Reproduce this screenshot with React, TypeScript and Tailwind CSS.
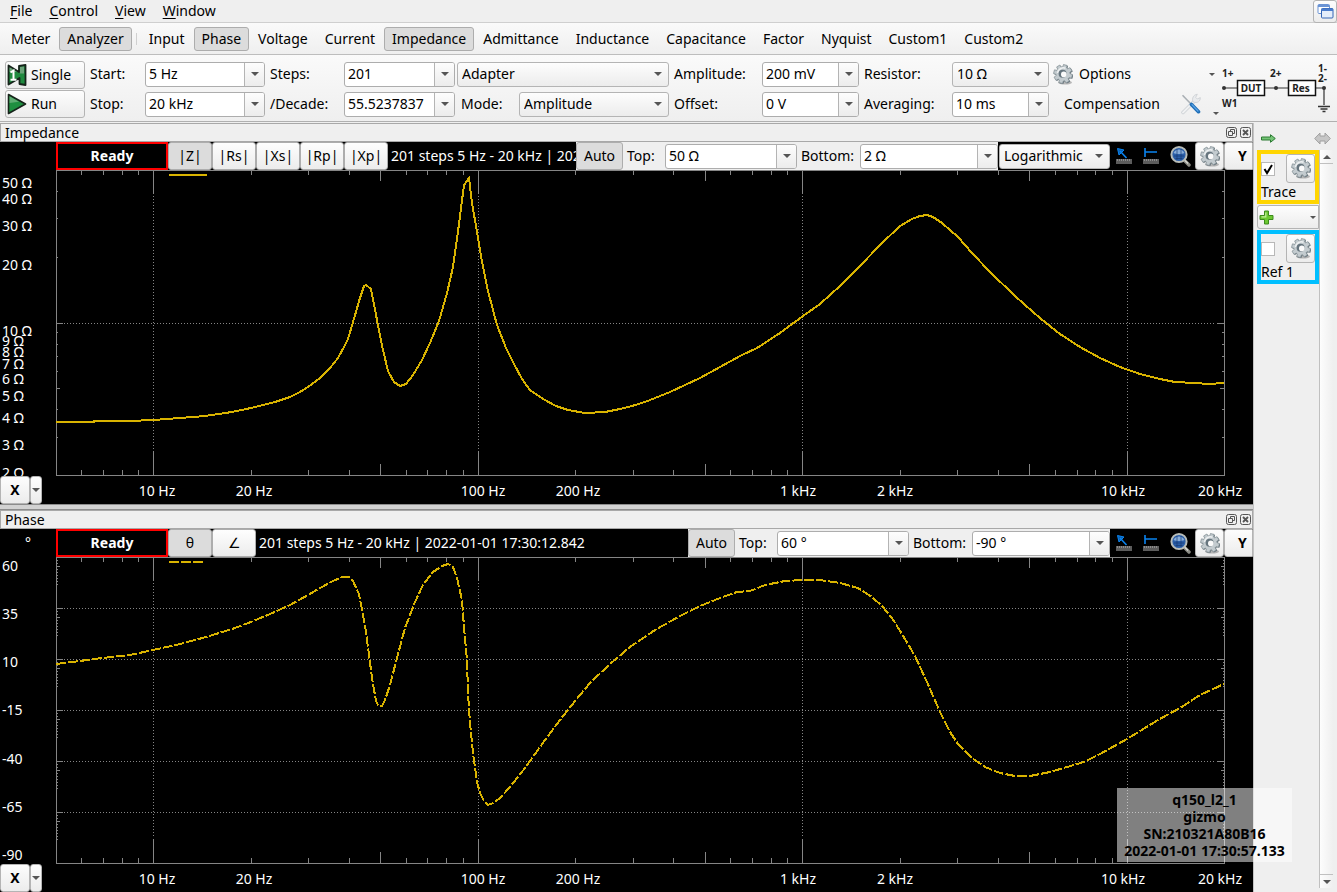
import { useId, useState } from 'react';
import type { ReactNode } from 'react';
import clsx from 'clsx';

const TRACE = '#d9b300';
const GRID = '#858585';

type Box = { x: number; y: number; w: number; h: number };
type AxisLabel = { text: string; at: number };

const IMPEDANCE_BOX: Box = { x: 56, y: 170, w: 1169, h: 306 };
const PHASE_BOX: Box = { x: 56, y: 557, w: 1169, h: 307 };

const impedancePoints =
  '56,422 94,422 94,421 129,421 153,420 180,418 205,416 232,412 251,408 275,402 290,397 300,392 308,387 320,378 330,368 338,358 344,347 348,339 353,322 360,298 364,286 366,285 371,289 377,320 383,350 388,371 394,382 400,386 406,384 413,375 422,360 430,343 439,321 447,293 453,267 459,224 464,185 469,178 472,203 476,226 481,256 488,291 497,325 506,348 514,364 522,379 530,390 543,399 556,406 568,410 585,413 605,412 620,409 632,406 645,402 670,392 700,378 720,367 740,356 757,348 780,333 803,316 820,304 840,286 860,266 880,245 900,226 912,219 920,216 927,215 933,217 942,223 958,237 972,253 990,272 1015,296 1041,319 1060,334 1080,347 1100,358 1120,367 1140,374 1160,379 1175,382 1195,383 1208,384 1224,383';

const phasePoints =
  '56,664 80,661 94,659 130,655 153,650 180,644 206,637 232,629 251,622 270,614 290,605 308,595 320,588 333,581 342,577 349,577 353,581 359,594 362,610 366,632 369,655 372,678 376,701 378,705 382,706 385,700 390,685 397,658 405,628 415,602 423,585 433,572 442,566 448,564 453,567 457,578 462,600 464,627 467,660 468,693 470,723 473,753 477,782 480,793 484,801 488,805 493,803 500,798 510,787 525,768 545,740 560,720 575,701 590,683 610,664 630,647 655,630 680,616 700,606 720,598 737,592 750,591 765,585 785,581 803,580 820,580 840,583 858,588 872,597 882,606 892,618 902,634 915,656 927,682 940,712 950,732 958,744 972,758 985,767 1000,773 1015,776 1030,776 1050,772 1084,762 1100,754 1127,739 1158,720 1180,708 1200,695 1224,684';

const hzLabels: AxisLabel[] = [
  { text: '10 Hz', at: 101 },
  { text: '20 Hz', at: 198 },
  { text: '100 Hz', at: 427 },
  { text: '200 Hz', at: 522 },
  { text: '1 kHz', at: 742 },
  { text: '2 kHz', at: 839 },
  { text: '10 kHz', at: 1067 },
  { text: '20 kHz', at: 1164 },
];

const ohmLabels: AxisLabel[] = [
  { text: '50 Ω', at: 13 },
  { text: '40 Ω', at: 29 },
  { text: '30 Ω', at: 56 },
  { text: '20 Ω', at: 95 },
  { text: '10 Ω', at: 161 },
  { text: '9 Ω', at: 171 },
  { text: '8 Ω', at: 182 },
  { text: '7 Ω', at: 194 },
  { text: '6 Ω', at: 209 },
  { text: '5 Ω', at: 226 },
  { text: '4 Ω', at: 248 },
  { text: '3 Ω', at: 275 },
  { text: '2 Ω', at: 303 },
];

const degreeLabels = ['60', '35', '10', '-15', '-40', '-65', '-90'];

const views = ['Input', 'Phase', 'Voltage', 'Current', 'Impedance', 'Admittance', 'Inductance', 'Capacitance', 'Factor', 'Nyquist', 'Custom1', 'Custom2'];

function logTicks(from: number, to: number) {
  const ticks: { value: number; digit: number }[] = [];
  for (let decade = 1; decade < to; decade *= 10) {
    for (let digit = 1; digit < 10; digit++) {
      const value = digit * decade;
      if (value > from && value < to) ticks.push({ value, digit });
    }
  }
  return ticks;
}

function gearPath(teeth: number, cx: number, cy: number) {
  const pts: string[] = [];
  for (let i = 0; i < teeth; i++) {
    const a = (i / teeth) * Math.PI * 2 + 0.25;
    [[-0.3, 7], [-0.2, 9.5], [0.2, 9.5], [0.3, 7]].forEach(([d, r]) => {
      pts.push(`${(cx + Math.cos(a + d) * r).toFixed(2)} ${(cy + Math.sin(a + d) * r).toFixed(2)}`);
    });
  }
  return `M${pts.join('L')}Z`;
}

const GEAR = gearPath(8, 10, 10);

/* ---------- icons ---------- */

function Gear() {
  return (
    <svg viewBox="0 0 20 21" className="h-[21px] w-5 shrink-0" aria-hidden="true">
      <ellipse cx="12" cy="18.5" rx="7" ry="2" fill="#000" opacity="0.25" />
      <path d={GEAR} transform="translate(.8 .6)" fill="#65727a" />
      <path d={GEAR} fill="#c3cbcf" stroke="#7d898f" strokeWidth="0.7" />
      <path d="M4.5 9a6 6 0 0 1 8-4.8" fill="none" stroke="#eef1f2" strokeWidth="1.6" />
      <circle cx="9.6" cy="9.8" r="4" fill="#66757e" />
      <circle cx="10.8" cy="10.4" r="2.8" fill="#fafafa" />
    </svg>
  );
}

function Arrow({ small = false }: { small?: boolean }) {
  return (
    <svg viewBox="0 0 8 4" className={small ? 'h-[3px] w-1.5' : 'h-1 w-2'} aria-hidden="true">
      <path d="M0 0H8L4 4Z" fill="#555" />
    </svg>
  );
}

function SingleIcon() {
  return (
    <svg viewBox="0 0 20 22" className="h-[22px] w-5 shrink-0" aria-hidden="true">
      <path d="M1.5 1.5 12 8V2l6.5-1v20l-6-1V14L1.5 20.5Z" fill="#1f8a3f" stroke="#16231a" strokeWidth="1.8" strokeLinejoin="round" />
      <path d="M2.5 3 10 8H2.5ZM13 3l4-.5v7h-4Z" fill="#a9b8a9" opacity="0.55" />
      <path d="M3.5 8.5 6.5 6.5v9M3.5 15.7h6" fill="none" stroke="#fff" strokeWidth="2" />
    </svg>
  );
}

function RunIcon() {
  return (
    <svg viewBox="0 0 20 22" className="h-[22px] w-5 shrink-0" aria-hidden="true">
      <path d="M1.5 1.5 18.5 11 1.5 20.5Z" fill="#1f8f40" stroke="#16231a" strokeWidth="1.6" strokeLinejoin="round" />
      <path d="M2.5 3.2 12 8.7 2.5 10Z" fill="#9fc9a5" opacity="0.5" />
    </svg>
  );
}

function WrenchIcon() {
  return (
    <svg viewBox="0 0 20 22" className="h-[22px] w-5" aria-hidden="true">
      <path d="M2 19.5 13 8.5" stroke="#c9ced2" strokeWidth="3.4" strokeLinecap="round" />
      <path d="M2 19.5 13 8.5" stroke="#f0f1f2" strokeWidth="2" strokeLinecap="round" />
      <path d="M12 8.8c-1.3-3.6.4-7 4.3-7.6l-1.6 3.2 1.6 1.6 3-1.4c.4 3.5-3 6.2-7.3 4.2Z" fill="#e9ebed" stroke="#c5cace" strokeWidth="0.7" />
      <path d="M1.5 2.2 11 12" stroke="#a9afb4" strokeWidth="1.6" />
      <path d="m10.5 11.5 7 7.2" stroke="#1f6fb8" strokeWidth="3.6" strokeLinecap="round" />
      <path d="m11 11.6 6 6.4" stroke="#5da5e6" strokeWidth="1.2" strokeLinecap="round" />
    </svg>
  );
}

function CursorIcon() {
  return (
    <svg viewBox="0 0 18 18" className="h-[18px] w-[18px]" aria-hidden="true">
      <rect x="1" y="12" width="16" height="5" fill="#5c5c5c" />
      <path d="M2 13h14" stroke="#8b8b8b" strokeDasharray="1 1" strokeWidth="2" />
      <path d="M2.500 1.500 9 3 4 8Z" fill="#0a5fb0" stroke="#0a84f0" />
      <path d="m5 4 6.500 7" fill="none" stroke="#0a84f0" strokeWidth="1.600" />
    </svg>
  );
}

function LevelIcon() {
  return (
    <svg viewBox="0 0 18 18" className="h-[18px] w-[18px]" aria-hidden="true">
      <rect x="1" y="12" width="16" height="5" fill="#5c5c5c" />
      <path d="M2 13h14" stroke="#8b8b8b" strokeDasharray="1 1" strokeWidth="2" />
      <path d="M3 1v9M3 5h12" fill="none" stroke="#0a84f0" strokeWidth="1.600" />
    </svg>
  );
}

function ZoomIcon() {
  return (
    <svg viewBox="0 0 22 22" className="h-[22px] w-[22px]" aria-hidden="true">
      <path d="m15 15 5 5" stroke="#8d8d86" strokeWidth="3.4" strokeLinecap="round" />
      <path d="m15.500 15 3.500 3.500" stroke="#dcdcd6" strokeWidth="1.200" />
      <circle cx="10" cy="9.500" r="7.600" fill="#2a5ea8" stroke="#b9bdb8" strokeWidth="2" />
      <path d="M4.500 8a6 6 0 0 1 11 0c-3 1.400-8 1.400-11 0Z" fill="#86acd9" />
      <path d="M5 11h10M6.500 13.500h7M8 4v11M12 4v11" stroke="#173b73" strokeWidth="0.700" />
    </svg>
  );
}

function WindowsIcon() {
  return (
    <svg viewBox="0 0 17 17" className="h-[17px] w-[17px]" aria-hidden="true">
      <rect x="1" y="1.500" width="11.500" height="9" rx="1" fill="#fff" stroke="#6a93d4" />
      <path d="M1 2h11.500v2H1Z" fill="#6a93d4" />
      <rect x="4.500" y="5.500" width="11.500" height="9.500" rx="1" fill="#e4edfa" stroke="#3465b5" />
      <path d="M4.500 5.500H16v2.500H4.500Z" fill="#4a7ccc" />
    </svg>
  );
}

function Circuit() {
  return (
    <svg viewBox="0 0 118 60" className="h-[60px] w-[118px] shrink-0" role="img" aria-label="Adapter wiring">
      <g stroke="#333" strokeWidth="1.200" fill="none">
        <path d="M5 29H18M46 29H69M97 29H105V46" />
        <path d="M99 47.500h12M101.500 50h7M103.500 52.500h3" strokeWidth="1.500" />
      </g>
      <rect x="18.500" y="21.500" width="27" height="15" fill="#fff" stroke="#111" strokeWidth="1.500" />
      <rect x="69.500" y="21.500" width="27" height="15" fill="#fff" stroke="#111" strokeWidth="1.500" />
      <circle cx="5" cy="29" r="2" fill="#333" />
      <circle cx="57" cy="29" r="2" fill="#333" />
      <circle cx="105" cy="29" r="2" fill="#333" />
      <g className="text-[10px] font-bold" fill="#222">
        <text x="3" y="18">1+</text>
        <text x="51" y="18">2+</text>
        <text x="99" y="13">1-</text>
        <text x="99" y="23">2-</text>
        <text x="3" y="48">W1</text>
        <text x="32" y="33" textAnchor="middle">DUT</text>
        <text x="82" y="33" textAnchor="middle">Res</text>
      </g>
    </svg>
  );
}

/* ---------- controls ---------- */

const raised = 'border border-[#b4b4b4] bg-linear-to-b from-[#fdfdfd] to-[#ececec]';

function Combo({ label, value, className }: { label: string; value: string; className?: string }) {
  const id = useId();
  return (
    <>
      <label htmlFor={id} className="whitespace-nowrap">{label}</label>
      <div className={clsx('flex h-[25px] overflow-hidden rounded-[3px] border border-[#adadad] bg-white', className)}>
        <input id={id} defaultValue={value} className="w-0 min-w-0 flex-1 pl-[3px] outline-none" />
        <button aria-label={`${label} presets`} className="grid w-5 shrink-0 place-items-center border-l border-[#b4b4b4] bg-linear-to-b from-[#fdfdfd] to-[#ececec]">
          <Arrow />
        </button>
      </div>
    </>
  );
}

function Select({ label, value, hideLabel, className }: { label: string; value: string; hideLabel?: boolean; className?: string }) {
  const id = useId();
  return (
    <>
      {!hideLabel && <label htmlFor={id} className="whitespace-nowrap">{label}</label>}
      <div className={clsx('grid h-[25px] items-center', className)}>
        <select id={id} aria-label={hideLabel ? label : undefined} className={clsx('col-start-1 row-start-1 h-full w-full appearance-none rounded-[3px] pl-1 outline-none', raised)}>
          <option>{value}</option>
        </select>
        <span className="pointer-events-none col-start-1 row-start-1 flex justify-end pr-[7px]">
          <Arrow />
        </span>
      </div>
    </>
  );
}

function ViewButton({ active, children }: { active?: boolean; children: ReactNode }) {
  return (
    <button className={clsx('h-6 rounded-[3px] border px-[7px] leading-5', active ? 'border-[#adadad] bg-[#dcdcdc]' : 'border-transparent')}>
      {children}
    </button>
  );
}

function QuantityButton({ active, children }: { active?: boolean; children: ReactNode }) {
  return (
    <button className={clsx('h-7 w-11 shrink-0 rounded-[3px] border border-[#adadad] text-black', active ? 'bg-[#dcdcdc]' : 'bg-linear-to-b from-[#fefefe] to-[#ececec]')}>
      {children}
    </button>
  );
}

/* ---------- plot ---------- */

function Plot({ box, points, dashed, log }: { box: Box; points: string; dashed?: boolean; log?: boolean }) {
  const { x, y, w, h } = box;
  const right = x + w - 1;
  const bottom = y + h - 1;
  const xOf = (hz: number) => Math.floor(x + (Math.log10(hz / 5) / Math.log10(4000)) * w) + 0.5;
  const yOf = (ohm: number) => Math.round(y + (Math.log10(50 / ohm) / Math.log10(25)) * (h - 1)) + 0.5;

  let solid = '';
  let dots = '';
  logTicks(5, 20000).forEach(({ value, digit }) => {
    const px = xOf(value);
    const len = digit === 1 ? 24 : digit === 5 ? 11 : 5;
    solid += `M${px} ${y}v${len}M${px} ${bottom}v${-len}`;
    if (digit === 1) dots += `M${px} ${y + 26}V${bottom - 25}`;
  });

  if (log) {
    logTicks(2, 50).forEach(({ value, digit }) => {
      const py = yOf(value);
      const len = value === 10 ? 7 : digit === 5 ? 4 : 2;
      solid += `M${x} ${py}h${len}M${right} ${py}h${-len}`;
      if (value === 10) dots += `M${x + 8} ${py}H${right - 8}`;
    });
  } else {
    for (let i = 0; i < 6; i++) {
      const py = y + i * 51 + 0.5;
      if (i > 0) {
        solid += `M${x} ${py}h7M${right} ${py}h-7`;
        dots += `M${x + 8} ${py}H${right - 8}`;
      }
      for (let k = 1; k < 10; k++) {
        const len = k === 3 ? 4 : 2;
        solid += `M${x} ${py + k * 3}h${len}M${right + 1} ${py + k * 3}h${-len}`;
      }
    }
  }

  const dash = dashed ? '10 2' : undefined;
  return (
    <svg viewBox={`${x} ${y} ${w} ${h}`} preserveAspectRatio="none" className="block h-full w-full" shapeRendering="crispEdges" fill="none">
      <path d={dots} stroke={GRID} strokeDasharray="1 2" />
      <path d={solid} stroke={GRID} />
      <rect x={x + 0.5} y={y + 0.5} width={w - 1} height={h - 1} stroke={GRID} />
      <path d={`M169 ${y + 5}h${dashed ? 34 : 38}`} stroke={TRACE} strokeWidth="2" strokeDasharray={dash} />
      <polyline points={points} stroke={TRACE} strokeWidth="2" strokeDasharray={dash} />
    </svg>
  );
}

type DockProps = {
  title: string;
  unit?: string;
  quantities: string[];
  top: string;
  bottom: string;
  scale?: string;
  yAxis: ReactNode;
  children: ReactNode;
};

function Dock({ title, unit, quantities, top, bottom, scale, yAxis, children }: DockProps) {
  return (
    <section className="flex min-h-0 min-w-0 flex-col bg-black text-white">
      <header className="flex h-[19px] shrink-0 items-center justify-between border border-[#a8a8a8] bg-[#efefef] pr-px pl-1 text-black">
        <h2>{title}</h2>
        <div className="flex gap-[3px]">
          <button aria-label={`Float ${title}`}>
            <svg viewBox="0 0 11 11" className="size-[11px]" fill="none" stroke="#555">
              <rect x="0.500" y="0.500" width="10" height="10" rx="2" />
              <path d="M4.500 4.500v-2h4v4h-2M2.500 4.500h4v4h-4Z" />
            </svg>
          </button>
          <button aria-label={`Close ${title}`}>
            <svg viewBox="0 0 11 11" className="size-[11px]" fill="none" stroke="#555">
              <rect x="0.500" y="0.500" width="10" height="10" rx="2" />
              <path d="m3 3 5 5M8 3 3 8" strokeWidth="1.800" />
            </svg>
          </button>
        </div>
      </header>

      <div className="flex h-7 shrink-0 items-center">
        <div className="w-14 shrink-0 text-center">{unit}</div>
        <div className="grid h-7 w-28 shrink-0 place-items-center border-2 border-[#f00] font-bold">Ready</div>
        {quantities.map((q, i) => (
          <QuantityButton key={q} active={i === 0}>{q}</QuantityButton>
        ))}
        <div className="min-w-0 flex-1 overflow-hidden pl-[3px] whitespace-nowrap">201 steps 5 Hz - 20 kHz | 2022-01-01 17:30:12.842</div>
        <div className="flex h-7 shrink-0 items-center gap-1 bg-[#efefef] text-black">
          <button className="h-7 w-[47px] rounded-[3px] border border-[#adadad] bg-[#dcdcdc]">Auto</button>
          <div className="grid grid-cols-[34px_132px_55px_138px] items-center gap-x-1">
            <Combo label="Top:" value={top} />
            <Combo label="Bottom:" value={bottom} />
          </div>
        </div>
        {scale && <Select label="Scale" hideLabel value={scale} className="ml-px w-[111px] text-black" />}
        <div className="flex w-[85px] shrink-0 items-center justify-between pr-1 pl-[5px]">
          <button aria-label="X cursor"><CursorIcon /></button>
          <button aria-label="Y cursor"><LevelIcon /></button>
          <button aria-label="Zoom"><ZoomIcon /></button>
        </div>
        <button aria-label={`${title} settings`} className={clsx('grid h-7 w-[29px] shrink-0 place-items-center rounded-[3px]', raised)}>
          <Gear />
        </button>
        <button className={clsx('h-7 w-[29px] shrink-0 rounded-l-[3px] pl-2 font-bold text-black', raised)}>Y</button>
      </div>

      <div className="grid min-h-0 flex-1 grid-cols-[56px_minmax(0,1fr)_28px] grid-rows-[minmax(0,1fr)_28px]">
        {yAxis}
        <div className="min-h-0">{children}</div>
        <div />
        <div className="flex text-black">
          <button className={clsx('h-7 w-[30px] rounded-[3px] font-bold', raised)}>X</button>
          <button aria-label="X axis options" className={clsx('grid h-7 w-3 place-items-center rounded-[3px]', raised)}>
            <Arrow />
          </button>
        </div>
        <div className="relative">
          {hzLabels.map((l) => (
            <span key={l.text} className="absolute top-[5px] -translate-x-1/2 leading-5 whitespace-nowrap" style={{ left: `${(l.at / 1169) * 100}%` }}>
              {l.text}
            </span>
          ))}
        </div>
      </div>
    </section>
  );
}

function Channel({ name, color, on }: { name: string; color: string; on: boolean }) {
  const id = useId();
  const [checked, setChecked] = useState(on);
  return (
    <div className={clsx('flex h-[54px] flex-col border-4', color)}>
      <div className="flex h-[29px] items-center justify-between">
        <span className="grid size-[14px] border border-[#b8b8b8] bg-white">
          <input id={id} type="checkbox" checked={checked} onChange={() => setChecked(!checked)} className="col-start-1 row-start-1 appearance-none" />
          {checked && (
            <svg viewBox="0 0 12 12" className="pointer-events-none col-start-1 row-start-1 size-3">
              <path d="m2.500 6 2.500 4L10 2" fill="none" stroke="#000" strokeWidth="2" />
            </svg>
          )}
        </span>
        <button aria-label={`${name} settings`} className={clsx('grid h-[29px] w-[29px] place-items-center rounded-[3px]', raised)}>
          <Gear />
        </button>
      </div>
      <label htmlFor={id} className="leading-[18px]">{name}</label>
    </div>
  );
}

export default function App() {
  return (
    <div className="relative flex h-screen flex-col overflow-hidden bg-[#efefef] font-['Noto_Sans',sans-serif] text-sm text-black">
      {/* Menu */}
      <nav className="flex h-[23px] shrink-0 items-center gap-[17px] border-b border-[#cfcfcf] pl-2.5">
        {['File', 'Control', 'View', 'Window'].map((m) => (
          <button key={m}>
            <span className="underline decoration-1 underline-offset-2">{m[0]}</span>
            {m.slice(1)}
          </button>
        ))}
        <button aria-label="Windows" className={clsx('ml-auto grid h-[23px] w-6 place-items-center rounded-[3px]', raised)}>
          <WindowsIcon />
        </button>
      </nav>

      {/* Views */}
      <div className="flex h-8 shrink-0 items-center gap-px border-b border-[#bdbdbd] bg-linear-to-b from-[#fafafa] to-[#efefef] pt-px pl-[3px]">
        <ViewButton>Meter</ViewButton>
        <ViewButton active>Analyzer</ViewButton>
        <div className="mx-[3px] h-3 w-px bg-[#d0d0d0]" />
        {views.map((v) => (
          <ViewButton key={v} active={v === 'Phase' || v === 'Impedance'}>{v}</ViewButton>
        ))}
      </div>

      {/* Sweep settings */}
      <div className="flex h-[67px] shrink-0 items-center border-b border-[#b0b0b0] bg-linear-to-b from-[#fafafa] to-[#efefef] pt-0.5 pl-[5px]">
        <div className="mr-[5px] flex w-20 flex-col gap-px">
          <button className={clsx('flex h-7 items-center gap-1 rounded-[3px] pl-px', raised)}><SingleIcon /> Single</button>
          <button className={clsx('flex h-7 items-center gap-1 rounded-[3px] pl-px', raised)}><RunIcon /> Run</button>
        </div>
        <div className="grid grid-cols-[50px_120px_69px_111px] items-center gap-x-[5px] gap-y-[5px]">
          <Combo label="Start:" value="5 Hz" />
          <Combo label="Steps:" value="201" />
          <Combo label="Stop:" value="20 kHz" />
          <Combo label="/Decade:" value="55.5237837" />
        </div>
        <div className="ml-0.5 flex w-[212px] flex-col gap-[5px]">
          <Select label="Configuration" hideLabel value="Adapter" />
          <div className="grid grid-cols-[58px_1fr] items-center pl-1">
            <Select label="Mode:" value="Amplitude" />
          </div>
        </div>
        <div className="ml-[5px] grid grid-cols-[83px_97px_83px_97px] items-center gap-x-[5px] gap-y-[5px]">
          <Combo label="Amplitude:" value="200 mV" />
          <Select label="Resistor:" value="10 Ω" />
          <Combo label="Offset:" value="0 V" />
          <Combo label="Averaging:" value="10 ms" />
        </div>
        <div className="flex min-w-0 flex-1 flex-col gap-[5px] pl-1">
          <button className="flex h-[25px] items-center gap-1.5 pr-1">
            <Gear /> Options
            <span className="ml-auto"><Arrow small /></span>
          </button>
          <div className="flex h-[25px] items-center pl-[11px]">
            <button>Compensation</button>
            <button aria-label="Tools" className="ml-auto flex items-end gap-3"><WrenchIcon /><Arrow small /></button>
          </div>
        </div>
        <Circuit />
      </div>

      <div className="flex min-h-0 flex-1 pt-px">
        <main className="grid min-w-0 flex-1 grid-cols-1 grid-rows-[381fr_6px_382fr]">
          <Dock
            title="Impedance"
            quantities={['|Z|', '|Rs|', '|Xs|', '|Rp|', '|Xp|']}
            top="50 Ω"
            bottom="2 Ω"
            scale="Logarithmic"
            yAxis={
              <div className="relative overflow-hidden">
                {ohmLabels.map((l) => (
                  <span key={l.text} className="absolute left-0.5 -translate-y-1/2 leading-[18px]" style={{ top: `${(l.at / 306) * 100}%` }}>
                    {l.text}
                  </span>
                ))}
              </div>
            }
          >
            <Plot box={IMPEDANCE_BOX} points={impedancePoints} log />
          </Dock>
          <div className="border-y border-[#8c8c8c] bg-[#d2d2d2]" />
          <Dock
            title="Phase"
            unit="°"
            quantities={['θ', '∠']}
            top="60 °"
            bottom="-90 °"
            yAxis={
              <div className="flex flex-col justify-between pl-0.5 leading-[18px]">
                {degreeLabels.map((d) => <span key={d}>{d}</span>)}
              </div>
            }
          >
            <Plot box={PHASE_BOX} points={phasePoints} dashed />
          </Dock>
        </main>

        {/* Channels */}
        <aside className="flex w-[84px] shrink-0 flex-col border-l border-[#c4c4c4] pr-1 pl-[3px]">
          <div className="flex h-[27px] items-center justify-between pt-[3px] pr-0.5 pl-1">
            <button aria-label="Next">
              <svg viewBox="0 0 15 9" className="h-[9px] w-[15px]">
                <path d="M.5 3h9V.700L14.300 4.500 9.500 8.300V6h-9Z" fill="#74c476" stroke="#2c7a33" />
              </svg>
            </button>
            <button aria-label="Resize">
              <svg viewBox="0 0 17 13" className="h-[13px] w-[17px]">
                <path d="M.7 6.500 6 1v3h5V1l5.300 5.500L11 12V9H6v3Z" fill="#c6c6c6" stroke="#a0a0a0" />
              </svg>
            </button>
          </div>
          <div className="flex min-h-0 flex-1 pb-1">
            <div className="flex flex-1 flex-col gap-px">
              <Channel name="Trace" color="border-[#ffd500]" on />
              <button aria-label="Add channel" className={clsx('flex h-6 shrink-0 items-center justify-between rounded-l-[3px] pr-0.5 pl-px', raised)}>
                <svg viewBox="0 0 15 15" className="size-[15px]">
                  <path d="M5.500 1h4v4.500H14v4H9.500V14h-4V9.500H1v-4h4.500Z" fill="#6cc832" stroke="#3c8a1c" />
                  <path d="M6.800 2.500v4.300H2.500" fill="none" stroke="#c4ee9c" strokeWidth="1.200" />
                </svg>
                <Arrow small />
              </button>
              <Channel name="Ref 1" color="border-[#00bfff]" on={false} />
            </div>
            <div className="flex w-[14px] flex-col justify-between border-l border-[#c0c0c0] bg-linear-to-r from-[#fdfdfd] to-[#efefef]">
              <button aria-label="Scroll up" className="grid h-[14px] place-items-center border-b border-[#c0c0c0]">
                <span className="rotate-180"><Arrow /></span>
              </button>
              <button aria-label="Scroll down" className="grid h-[14px] place-items-center border-t border-[#c0c0c0]">
                <Arrow />
              </button>
            </div>
          </div>
        </aside>
      </div>

      {/* Device watermark */}
      <div className="pointer-events-none absolute right-[45px] bottom-[30px] w-[175px] bg-white/50 py-[3px] text-center leading-[17px] font-bold">
        <p>q150_l2_1</p>
        <p>gizmo</p>
        <p>SN:210321A80B16</p>
        <p>2022-01-01 17:30:57.133</p>
      </div>
    </div>
  );
}
